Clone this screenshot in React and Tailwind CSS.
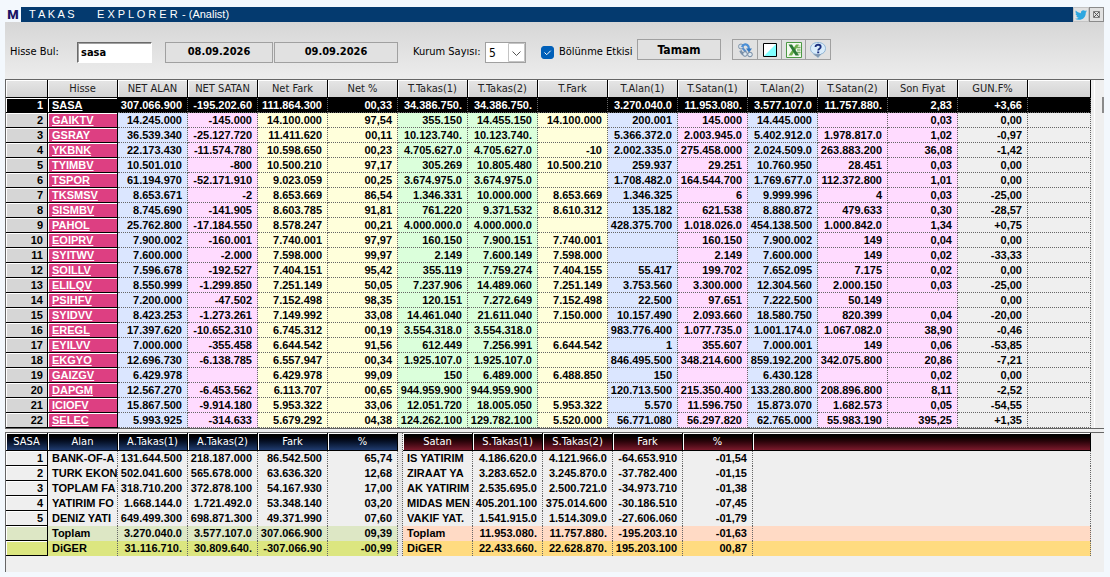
import { useState } from "react";
import { FaTwitter } from "react-icons/fa";

const COLUMNS = [
  { label: "NET ALAN", bg: "bg-[#dbe6ff]" },
  { label: "NET SATAN", bg: "bg-[#ffdbff]" },
  { label: "Net Fark", bg: "bg-[#ffffdb]" },
  { label: "Net %", bg: "bg-[#ffffdb]" },
  { label: "T.Takas(1)", bg: "bg-[#dbffdb]" },
  { label: "T.Takas(2)", bg: "bg-[#dbffdb]" },
  { label: "T.Fark", bg: "bg-[#ffffdb]" },
  { label: "T.Alan(1)", bg: "bg-[#dbe6ff]" },
  { label: "T.Satan(1)", bg: "bg-[#ffdbff]" },
  { label: "T.Alan(2)", bg: "bg-[#dbe6ff]" },
  { label: "T.Satan(2)", bg: "bg-[#ffdbff]" },
  { label: "Son Fiyat", bg: "bg-[#ffdbff]" },
  { label: "GUN.F%", bg: "bg-[#efefef]" },
];

const ROWS = [
  ["SASA", "307.066.900", "-195.202.60", "111.864.300", "00,33", "34.386.750.", "34.386.750.", "", "3.270.040.0", "11.953.080.", "3.577.107.0", "11.757.880.", "2,83", "+3,66"],
  ["GAIKTV", "14.245.000", "-145.000", "14.100.000", "97,54", "355.150", "14.455.150", "14.100.000", "200.001", "145.000", "14.445.000", "", "0,03", "0,00"],
  ["GSRAY", "36.539.340", "-25.127.720", "11.411.620", "00,11", "10.123.740.", "10.123.740.", "", "5.366.372.0", "2.003.945.0", "5.402.912.0", "1.978.817.0", "1,02", "-0,97"],
  ["YKBNK", "22.173.430", "-11.574.780", "10.598.650", "00,23", "4.705.627.0", "4.705.627.0", "-10", "2.002.335.0", "275.458.000", "2.024.509.0", "263.883.200", "36,08", "-1,42"],
  ["TYIMBV", "10.501.010", "-800", "10.500.210", "97,17", "305.269", "10.805.480", "10.500.210", "259.937", "29.251", "10.760.950", "28.451", "0,03", "0,00"],
  ["TSPOR", "61.194.970", "-52.171.910", "9.023.059", "00,25", "3.674.975.0", "3.674.975.0", "", "1.708.482.0", "164.544.700", "1.769.677.0", "112.372.800", "1,01", "0,00"],
  ["TKSMSV", "8.653.671", "-2", "8.653.669", "86,54", "1.346.331", "10.000.000", "8.653.669", "1.346.325", "6", "9.999.996", "4", "0,03", "-25,00"],
  ["SISMBV", "8.745.690", "-141.905", "8.603.785", "91,81", "761.220", "9.371.532", "8.610.312", "135.182", "621.538", "8.880.872", "479.633", "0,30", "-28,57"],
  ["PAHOL", "25.762.800", "-17.184.550", "8.578.247", "00,21", "4.000.000.0", "4.000.000.0", "", "428.375.700", "1.018.026.0", "454.138.500", "1.000.842.0", "1,34", "+0,75"],
  ["EOIPRV", "7.900.002", "-160.001", "7.740.001", "97,97", "160.150", "7.900.151", "7.740.001", "", "160.150", "7.900.002", "149", "0,04", "0,00"],
  ["SYITWV", "7.600.000", "-2.000", "7.598.000", "99,97", "2.149", "7.600.149", "7.598.000", "", "2.149", "7.600.000", "149", "0,02", "-33,33"],
  ["SOILLV", "7.596.678", "-192.527", "7.404.151", "95,42", "355.119", "7.759.274", "7.404.155", "55.417", "199.702", "7.652.095", "7.175", "0,02", "0,00"],
  ["ELILQV", "8.550.999", "-1.299.850", "7.251.149", "50,05", "7.237.906", "14.489.060", "7.251.149", "3.753.560", "3.300.000", "12.304.560", "2.000.150", "0,03", "-25,00"],
  ["PSIHFV", "7.200.000", "-47.502", "7.152.498", "98,35", "120.151", "7.272.649", "7.152.498", "22.500", "97.651", "7.222.500", "50.149", "", "0,00"],
  ["SYIDVV", "8.423.253", "-1.273.261", "7.149.992", "33,08", "14.461.040", "21.611.040", "7.150.000", "10.157.490", "2.093.660", "18.580.750", "820.399", "0,04", "-20,00"],
  ["EREGL", "17.397.620", "-10.652.310", "6.745.312", "00,19", "3.554.318.0", "3.554.318.0", "", "983.776.400", "1.077.735.0", "1.001.174.0", "1.067.082.0", "38,90", "-0,46"],
  ["EYILVV", "7.000.000", "-355.458", "6.644.542", "91,56", "612.449", "7.256.991", "6.644.542", "1", "355.607", "7.000.001", "149", "0,06", "-53,85"],
  ["EKGYO", "12.696.730", "-6.138.785", "6.557.947", "00,34", "1.925.107.0", "1.925.107.0", "", "846.495.500", "348.214.600", "859.192.200", "342.075.800", "20,86", "-7,21"],
  ["GAIZGV", "6.429.978", "", "6.429.978", "99,09", "150", "6.489.000", "6.488.850", "150", "", "6.430.128", "", "0,02", "0,00"],
  ["DAPGM", "12.567.270", "-6.453.562", "6.113.707", "00,65", "944.959.900", "944.959.900", "", "120.713.500", "215.350.400", "133.280.800", "208.896.800", "8,11", "-2,52"],
  ["ICIOFV", "15.867.500", "-9.914.180", "5.953.322", "33,06", "12.051.720", "18.005.050", "5.953.322", "5.570", "11.596.750", "15.873.070", "1.682.573", "0,05", "-54,55"],
  ["SELEC", "5.993.925", "-314.633", "5.679.292", "04,38", "124.262.100", "129.782.100", "5.520.000", "56.771.080", "56.297.820", "62.765.000", "55.983.190", "395,25", "+1,35"],
];

const BUYERS = [
  ["BANK-OF-A", "131.644.500", "218.187.000", "86.542.500", "65,74"],
  ["TURK EKON", "502.041.600", "565.678.000", "63.636.320", "12,68"],
  ["TOPLAM FA", "318.710.200", "372.878.100", "54.167.930", "17,00"],
  ["YATIRIM FO", "1.668.144.0", "1.721.492.0", "53.348.140", "03,20"],
  ["DENIZ YATI", "649.499.300", "698.871.300", "49.371.990", "07,60"],
  ["Toplam", "3.270.040.0", "3.577.107.0", "307.066.900", "09,39"],
  ["DiGER", "31.116.710.", "30.809.640.", "-307.066.90", "-00,99"],
];

const SELLERS = [
  ["IS YATIRIM", "4.186.620.0", "4.121.966.0", "-64.653.910", "-01,54"],
  ["ZIRAAT YA", "3.283.652.0", "3.245.870.0", "-37.782.400", "-01,15"],
  ["AK YATIRIM", "2.535.695.0", "2.500.721.0", "-34.973.710", "-01,38"],
  ["MIDAS MEN", "405.201.100", "375.014.600", "-30.186.510", "-07,45"],
  ["VAKIF YAT.", "1.541.915.0", "1.514.309.0", "-27.606.060", "-01,79"],
  ["Toplam", "11.953.080.", "11.757.880.", "-195.203.10", "-01,63"],
  ["DiGER", "22.433.660.", "22.628.870.", "195.203.100", "00,87"],
];

const TABLE = "w-full table-fixed border-separate border-spacing-0 text-[11px] leading-[14px] whitespace-nowrap";
const TAHOMA = "font-['DejaVu_Sans_Condensed','DejaVu_Sans',sans-serif]";
const BUTTON = "flex items-center justify-center h-[21px] border border-[#a0a0a0] bg-[#e1e1e1]";

function TitleBar() {
  return (
    <div className="flex items-center h-[15px] bg-[#043a6f] text-white text-[11px] leading-[15px]">
      <span className="flex items-center justify-center w-4 h-[15px] bg-[#f3f8fd] text-[#1b1464] font-black text-[13px] font-[Roboto,sans-serif]">M</span>
      <h1 className="flex-1 flex pl-2 whitespace-pre">
        <span className="w-[68px]">T A K A S</span>
        <span className="w-[85px]">E X P L O R E R</span>
        <span>- (Analist)</span>
      </h1>
      <button aria-label="Twitter" className="flex items-center justify-center w-4 h-[15px] bg-[#e1e1e1] border border-[#c4c4c4]">
        <FaTwitter className="w-3 h-3 shrink-0 text-[#2ea7e0]" />
      </button>
      <button aria-label="Kapat" className="flex items-center justify-center w-[15px] h-[15px] bg-[#e1e1e1] border border-[#8a8a8a]">
        <svg viewBox="0 0 7 7" className="w-[7px] h-[7px]" fill="none" stroke="#555">
          <path d="M.5.5h6v6h-6z" strokeWidth=".7" />
          <path d="M1 1l5 5M6 1L1 6" />
        </svg>
      </button>
    </div>
  );
}

function SearchIcon() {
  return (
    <svg viewBox="0 0 16 16" className="w-4 h-4" fill="none">
      <circle cx="4" cy="4.500" r="2.500" fill="#d3dde8" stroke="#8398ad" />
      <path d="M3.500 8.500c1 3 3 4 5 4" stroke="#7d93ab" strokeWidth="2.500" />
      <path d="M5 5c1-3 5-4 6.500-.5l.5 3" stroke="#4b8fd6" strokeWidth="2.200" />
      <path d="M9 6.500h6l-3 4z" fill="#3579c2" />
      <path d="M5.500 6l3.500 4" stroke="#5b8fca" strokeWidth="2" />
      <circle cx="8" cy="12" r="2.300" fill="#dfe8ef" stroke="#7187a0" />
      <circle cx="13" cy="12.500" r="2.300" fill="#dfe8ef" stroke="#7187a0" />
    </svg>
  );
}

function ContrastIcon() {
  return (
    <svg viewBox="0 0 14 14" className="w-[14px] h-[14px]">
      <path d="M0 0h14v14H0z" fill="#fff" />
      <path d="M14 0v14H0z" fill="#80ffff" />
      <path d="M.5.5h13v13H.5z" fill="none" stroke="#000" />
    </svg>
  );
}

function ExcelIcon() {
  return (
    <svg viewBox="0 0 16 16" className="w-4 h-4">
      <path d="M.5.5h15v15H.5z" fill="#f4f9ef" stroke="#4d9a45" />
      <path d="M11 3h3.500v10H11z" fill="#cfe4c2" />
      <path d="M11 5.500h3.500M11 8h3.500M11 10.500h3.500" stroke="#79ae67" />
      <path d="M10 2.500h3L6 13.500H2.500z" fill="#6cb04c" />
      <path d="M2.500 2.500H6l7 11H9.500z" fill="#2b7a35" />
    </svg>
  );
}

function HelpIcon() {
  return (
    <svg viewBox="0 0 16 16" className="w-4 h-4">
      <path d="M8 .5c4.500 0 7.500 2.500 7.500 6 0 3-2 5-4.500 5.500L8 15.500 7 12.400C3 12 .5 9.800.5 6.500.5 3 3.500.5 8 .5z" fill="#d9ecfb" stroke="#8fb4d4" />
      <path d="M3 12.200l5 3.300 3-3.500" fill="#7f97b0" />
      <path d="M5.500 5c0-3 5.200-3 5.200 0 0 1.700-2.500 1.700-2.500 3.500" fill="none" stroke="#1b2f7d" strokeWidth="1.800" />
      <path d="M7.200 9.500h2v1.800h-2z" fill="#1b2f7d" />
    </svg>
  );
}

function Toolbar() {
  const [query, setQuery] = useState("sasa");
  const [count, setCount] = useState("5");
  const [split, setSplit] = useState(true);

  return (
    <div className={`flex items-center h-[57px] pt-1 pl-[5px] bg-linear-to-b from-[#d6d6d6] to-[#ededed] text-[11px] text-black ${TAHOMA}`}>
      <label htmlFor="hisse" className="w-[67px]">Hisse Bul:</label>
      <input
        id="hisse"
        value={query}
        onChange={(e) => setQuery(e.target.value)}
        className="w-[75px] h-[21px] px-[3px] bg-white border-t border-l border-t-[#6a6a6a] border-l-[#6a6a6a] border-b border-r border-b-white border-r-white shadow-[inset_1px_1px_0_#a0a0a0] font-bold"
      />
      <button className={`${BUTTON} ml-[13px] w-[108px] font-bold`}>08.09.2026</button>
      <button className={`${BUTTON} ml-px w-[124px] font-bold`}>09.09.2026</button>
      <label htmlFor="kurum" className="ml-[15px] w-[72px] whitespace-nowrap">Kurum Sayısı:</label>
      <div className="relative w-[41px] h-[21px]">
        <select
          id="kurum"
          value={count}
          onChange={(e) => setCount(e.target.value)}
          className="appearance-none w-full h-full pl-[3px] bg-white border border-[#a0a0a0] text-xs"
        >
          <option>5</option>
          <option>10</option>
        </select>
        <svg viewBox="0 0 17 19" className="pointer-events-none absolute right-px top-px w-[17px] h-[19px]" fill="none">
          <path d="M.5.500h16v18H.5z" stroke="#c4c4c4" />
          <path d="M4.500 8.500l4 4 4-4" stroke="#555" />
        </svg>
      </div>
      <div className="relative ml-[15px] w-[13px] h-[13px]">
        <input
          id="bolunme"
          type="checkbox"
          checked={split}
          onChange={(e) => setSplit(e.target.checked)}
          className="peer appearance-none block w-full h-full rounded-[3px] border border-[#005fb8] bg-white checked:bg-[#005fb8]"
        />
        <svg viewBox="0 0 13 13" className="pointer-events-none absolute inset-0 hidden peer-checked:block" fill="none">
          <path d="M3.500 6.500l2.200 2.200 4-4" stroke="#fff" />
        </svg>
      </div>
      <label htmlFor="bolunme" className="ml-[5px] w-[78px] whitespace-nowrap">Bölünme Etkisi</label>
      <div className="flex items-center pb-[6px]">
        <button className={`${BUTTON} w-[84px] font-bold text-xs`}>Tamam</button>
        <div className="flex ml-[11px]">
          <button aria-label="Ara" className={`${BUTTON} w-[26px]`}><SearchIcon /></button>
          <button aria-label="Renk" className={`${BUTTON} -ml-px w-[25px]`}><ContrastIcon /></button>
          <button aria-label="Excel" className={`${BUTTON} -ml-px w-[25px]`}><ExcelIcon /></button>
          <button aria-label="Yardım" className={`${BUTTON} -ml-px w-[26px]`}><HelpIcon /></button>
        </div>
      </div>
    </div>
  );
}

function MainTable() {
  const head = "h-[18px] p-0 pt-px font-normal text-center text-[#222] border-r border-b border-black bg-linear-to-b from-[#e6e6e6] to-[#d3d3d3] shadow-[inset_1px_1px_0_#fff]";
  return (
    <table className={TABLE}>
      <colgroup>
        <col className="w-[42px]" />
        <col className="w-[70px]" />
        {COLUMNS.map((c) => <col key={c.label} className="w-[70px]" />)}
        <col />
      </colgroup>
      <thead className={TAHOMA}>
        <tr>
          <th className={head}></th>
          <th className={head}>Hisse</th>
          {COLUMNS.map((c) => <th key={c.label} className={head}>{c.label}</th>)}
          <th className={head}></th>
        </tr>
      </thead>
      <tbody className="font-bold text-right">
        {ROWS.map(([name, ...values], i) => {
          const active = i === 0;
          const tone = active ? "bg-black text-white" : "";
          return (
            <tr key={name}>
              <td className={`h-[15px] p-0 pr-1 border-r border-b border-black shadow-[inset_1px_1px_0_#fff] ${active ? tone : "bg-[#d6d6d6]"}`}>{i + 1}</td>
              <td className={`p-0 pl-1 text-left text-white border-r border-b border-black shadow-[inset_1px_1px_0_#fff] ${active ? "bg-black" : "bg-[#dd3f82]"}`}>
                <a href="#" className="underline underline-offset-1">{name}</a>
              </td>
              {values.map((v, j) => (
                <td key={j} className={`p-0 pr-[5px] border-r border-b border-dotted border-[#666] ${active ? tone : COLUMNS[j].bg}`}>{v}</td>
              ))}
              <td className={`p-0 border-r border-b border-dotted border-[#666] ${active ? tone : "bg-[#efefef]"}`}></td>
            </tr>
          );
        })}
      </tbody>
    </table>
  );
}

function BuyersTable() {
  const head = "h-[18px] p-0 pt-px font-normal text-center text-white border-r border-b border-black bg-linear-to-b from-black to-[#203c70] shadow-[inset_1px_1px_0_#fff]";
  return (
    <table className={TABLE}>
      <colgroup>
        <col className="w-[42px]" />
        <col span={5} className="w-[70px]" />
      </colgroup>
      <thead className={TAHOMA}>
        <tr>
          {["SASA", "Alan", "A.Takas(1)", "A.Takas(2)", "Fark", "%"].map((h) => <th key={h} className={head}>{h}</th>)}
        </tr>
      </thead>
      <tbody className="font-bold text-right">
        {BUYERS.map(([name, ...values], i) => (
          <tr key={name} className={i === 5 ? "bg-[#dde7c5]" : i === 6 ? "bg-[#dce680]" : ""}>
            <td className="h-[15px] p-0 pr-1 border-r border-b border-black shadow-[inset_1px_1px_0_#fff]">{i < 5 ? i + 1 : ""}</td>
            <td className="p-0 pb-px pl-1 text-left overflow-hidden border-r border-dotted border-[#666]">{name}</td>
            {values.map((v, j) => (
              <td key={j} className="p-0 pb-px pr-[5px] border-r border-dotted border-[#666]">{v}</td>
            ))}
          </tr>
        ))}
      </tbody>
    </table>
  );
}

function SellersTable() {
  const head = "h-[18px] p-0 pt-px font-normal text-center text-white border-r border-b border-black bg-linear-to-b from-black to-[#7c1a2c] shadow-[inset_1px_1px_0_#fff]";
  return (
    <table className={TABLE}>
      <colgroup>
        <col span={5} className="w-[70px]" />
        <col />
      </colgroup>
      <thead className={TAHOMA}>
        <tr>
          {["Satan", "S.Takas(1)", "S.Takas(2)", "Fark", "%", ""].map((h) => <th key={h} className={head}>{h}</th>)}
        </tr>
      </thead>
      <tbody className="font-bold text-right">
        {SELLERS.map(([name, ...values], i) => (
          <tr key={name} className={i === 5 ? "bg-[#ffdac5]" : i === 6 ? "bg-[#ffdb80]" : ""}>
            <td className="h-[15px] p-0 pb-px pl-1 text-left overflow-hidden border-r border-dotted border-[#666]">{name}</td>
            {values.map((v, j) => (
              <td key={j} className="p-0 pb-px pr-[5px] border-r border-dotted border-[#666]">{v}</td>
            ))}
            <td className="p-0 border-r border-dotted border-[#666]"></td>
          </tr>
        ))}
      </tbody>
    </table>
  );
}

export default function App() {
  return (
    <div className="min-h-screen pt-[7px] pl-[5px] pr-[6px] bg-[#f3f8fd] text-black font-['Liberation_Sans',Arial,sans-serif]">
      <TitleBar />
      <Toolbar />
      <div className="flex bg-[#efefef] border-t border-l border-b border-[#666]">
        <div className="flex-1 min-w-0">
          <MainTable />
        </div>
        <div className="flex justify-end w-[13px] pl-[3px]">
          <div className="flex-1 border-l border-white"></div>
          <div className="w-[2px] h-4 mt-[17px] bg-[#8a8a8a]"></div>
        </div>
      </div>
      <div className="h-[3px] bg-[#efefef]"></div>
      <div className="flex pr-[13px] pb-4 bg-[#efefef] border-t border-l border-[#666]">
        <div className="w-[392px] shrink-0">
          <BuyersTable />
        </div>
        <div className="w-[5px] shrink-0 bg-[#e4e4e4] border-r border-dotted border-[#666]"></div>
        <div className="flex-1 min-w-0">
          <SellersTable />
        </div>
      </div>
    </div>
  );
}
